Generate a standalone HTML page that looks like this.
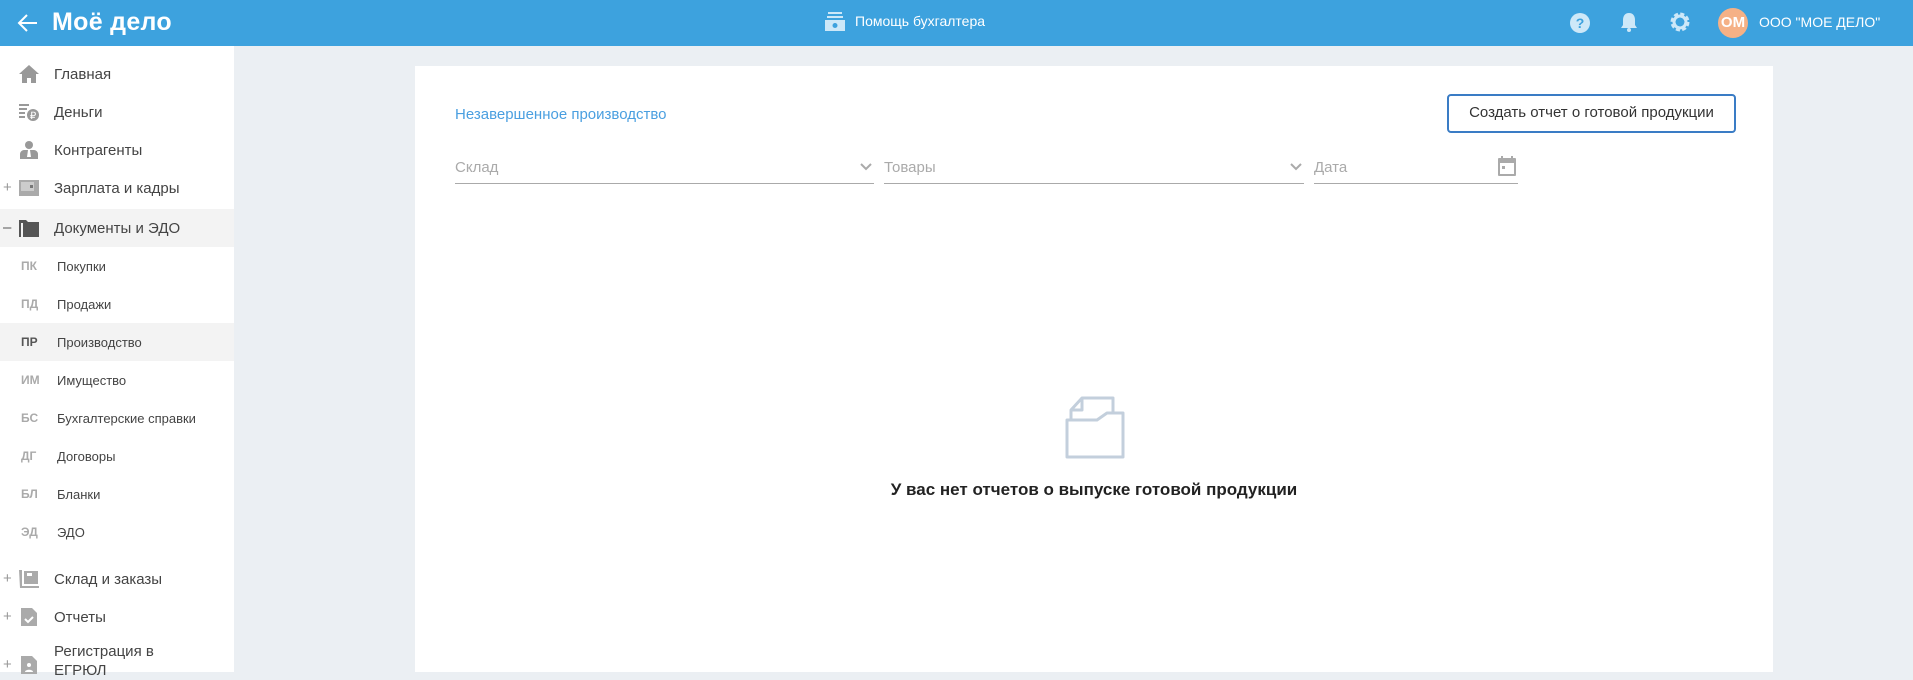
<!DOCTYPE html>
<html><head><meta charset="utf-8">
<style>
*{margin:0;padding:0;box-sizing:border-box}
body{width:1913px;height:672px;overflow:hidden;background:#ebeff3;font-family:"Liberation Sans","Noto Sans CJK SC",sans-serif;position:relative}
.hdr{position:absolute;left:0;top:0;width:1913px;height:46px;background:#3da2de;color:#fff}
.side{position:absolute;left:0;top:46px;width:234px;height:626px;background:#fff}
.it{position:absolute;left:0;width:234px;height:38px;font-size:15px;color:#444}
.it .t{position:absolute;left:54px;top:11px}
.it .ic{position:absolute;left:19px;top:10px;width:20px;height:18px}
.it .pm{position:absolute;left:3px;top:10px;color:#999;font-size:15px}
.sub{position:absolute;left:0;width:234px;height:38px;font-size:13px;color:#444}
.sub .c{position:absolute;left:21px;top:12px;font-weight:bold;color:#aaa;font-size:12px}
.sub .t{position:absolute;left:57px;top:12px}
.hl{background:#f3f3f3}
.card{position:absolute;left:415px;top:66px;width:1358px;height:606px;background:#fff}
.fld{position:absolute;top:91px;height:27px;border-bottom:1.5px solid #aaa;color:#aaa;font-size:15px}
.fld span{position:absolute;left:0;top:2px}
</style></head><body>
<div class="hdr">
 <svg style="position:absolute;left:17px;top:13px" width="22" height="20" viewBox="0 0 22 20"><path d="M20 10H3M10 2L2 10l8 8" stroke="#fff" stroke-width="2" fill="none"/></svg>
 <div style="position:absolute;left:52px;top:8px;font-size:25px;font-weight:bold;letter-spacing:0.3px">Моё дело</div>
 <svg style="position:absolute;left:825px;top:12px" width="20" height="19" viewBox="0 0 20 19"><rect x="3" y="0" width="14" height="2" fill="#cde8f8"/><rect x="2" y="4" width="16" height="2" fill="#cde8f8"/><rect x="0" y="8" width="20" height="11" fill="#cde8f8"/><circle cx="10" cy="13.5" r="2.5" fill="#3da2de"/></svg>
 <div style="position:absolute;left:855px;top:13px;font-size:14px">Помощь бухгалтера</div>
 <svg style="position:absolute;left:1569px;top:12px" width="22" height="22" viewBox="0 0 22 22"><circle cx="11" cy="11" r="10" fill="#cde8f8"/><text x="11" y="16" text-anchor="middle" font-size="14" font-weight="bold" fill="#3da2de" font-family="Liberation Sans">?</text></svg>
 <svg style="position:absolute;left:1620px;top:11px" width="18" height="22" viewBox="0 0 18 22"><path d="M9 2c4 0 6 3 6 7v5l2 3H1l2-3V9c0-4 2-7 6-7z" fill="#cde8f8"/><circle cx="9" cy="19" r="2" fill="#cde8f8"/></svg>
 <svg style="position:absolute;left:1669px;top:11px" width="22" height="22" viewBox="0 0 22 22"><circle cx="11" cy="11" r="7" fill="none" stroke="#cde8f8" stroke-width="5" stroke-dasharray="3.5 2"/><circle cx="11" cy="11" r="6" fill="none" stroke="#cde8f8" stroke-width="3"/></svg>
 <div style="position:absolute;left:1718px;top:8px;width:30px;height:30px;border-radius:50%;background:#f5b186;font-weight:bold;font-size:15px;text-align:center;line-height:30px">ОМ</div>
 <div style="position:absolute;left:1759px;top:14px;font-size:14px">ООО "МОЕ ДЕЛО"</div>
</div>
<div class="side">
 <div class="it" style="top:9px"><svg class="ic" viewBox="0 0 20 18"><path d="M10 0L0 9h3v9h5v-5h4v5h5V9h3z" fill="#999"/></svg><span class="t">Главная</span></div>
 <div class="it" style="top:47px"><svg class="ic" viewBox="0 0 20 18"><rect x="0" y="1" width="10" height="2" fill="#999"/><rect x="0" y="5" width="8" height="2" fill="#999"/><rect x="0" y="9" width="6" height="2" fill="#999"/><rect x="0" y="13" width="6" height="2" fill="#999"/><circle cx="14" cy="12" r="6" fill="#999"/><text x="14" y="16" text-anchor="middle" font-size="10" fill="#fff" font-family="Liberation Sans">₽</text></svg><span class="t">Деньги</span></div>
 <div class="it" style="top:85px"><svg class="ic" viewBox="0 0 20 18"><circle cx="10" cy="4" r="4" fill="#999"/><path d="M1 18v-5c0-2 2-4 4-4h10c2 0 4 2 4 4v5z" fill="#999"/><path d="M9 9h2l1 7h-4z" fill="#fff"/></svg><span class="t">Контрагенты</span></div>
 <div class="it" style="top:123px"><span class="pm">+</span><svg class="ic" viewBox="0 0 20 18"><rect x="0" y="1" width="20" height="16" fill="#aaa"/><rect x="2" y="3" width="13" height="9" fill="#ccc"/><rect x="11" y="6" width="3" height="3" fill="#777"/></svg><span class="t">Зарплата и кадры</span></div>
 <div class="it hl" style="top:163px;height:38px"><span class="pm" style="color:#555">–</span><svg class="ic" viewBox="0 0 20 18"><path d="M0 1h7l2 2h11v15H0z" fill="#555"/><rect x="2" y="4" width="2" height="14" fill="#f3f3f3"/></svg><span class="t">Документы и ЭДО</span></div>
 <div class="sub" style="top:201px"><span class="c">ПК</span><span class="t">Покупки</span></div>
 <div class="sub" style="top:239px"><span class="c">ПД</span><span class="t">Продажи</span></div>
 <div class="sub hl" style="top:277px"><span class="c" style="color:#555">ПР</span><span class="t">Производство</span></div>
 <div class="sub" style="top:315px"><span class="c">ИМ</span><span class="t">Имущество</span></div>
 <div class="sub" style="top:353px"><span class="c">БС</span><span class="t">Бухгалтерские справки</span></div>
 <div class="sub" style="top:391px"><span class="c">ДГ</span><span class="t">Договоры</span></div>
 <div class="sub" style="top:429px"><span class="c">БЛ</span><span class="t">Бланки</span></div>
 <div class="sub" style="top:467px"><span class="c">ЭД</span><span class="t">ЭДО</span></div>
 <div class="it" style="top:514px"><span class="pm">+</span><svg class="ic" viewBox="0 0 20 18"><path d="M0 0h3v16h17v2H1z" fill="#aaa"/><rect x="5" y="1" width="14" height="13" fill="#aaa"/><rect x="8" y="3" width="5" height="3" fill="#fff"/></svg><span class="t">Склад и заказы</span></div>
 <div class="it" style="top:552px"><span class="pm">+</span><svg class="ic" viewBox="0 0 20 18"><path d="M2 0h11l5 5v13H2z" fill="#aaa"/><path d="M6 11l3 3 5-5" stroke="#fff" stroke-width="2" fill="none"/></svg><span class="t">Отчеты</span></div>
 <div class="it" style="top:590px"><span class="pm" style="top:20px">+</span><svg class="ic" style="top:20px" viewBox="0 0 20 18"><path d="M2 0h11l5 5v13H2z" fill="#aaa"/><circle cx="10" cy="9" r="2" fill="#fff"/><path d="M6 16c0-3 8-3 8 0z" fill="#fff"/></svg><span class="t" style="top:6px;line-height:19px">Регистрация в<br>ЕГРЮЛ</span></div>
</div>
<div class="card">
 <div style="position:absolute;left:40px;top:40px;font-size:15px;color:#4a9fe0">Незавершенное производство</div>
 <div style="position:absolute;left:1032px;top:28px;width:289px;height:39px;border:2.5px solid #3a7cc5;border-radius:4px;font-size:15px;color:#333;text-align:center;line-height:34px">Создать отчет о готовой продукции</div>
 <div class="fld" style="left:40px;width:419px"><span>Склад</span><svg style="position:absolute;right:2px;top:6px" width="12" height="8" viewBox="0 0 12 8"><path d="M1 1l5 5 5-5" stroke="#aaa" stroke-width="2" fill="none"/></svg></div>
 <div class="fld" style="left:469px;width:420px"><span>Товары</span><svg style="position:absolute;right:2px;top:6px" width="12" height="8" viewBox="0 0 12 8"><path d="M1 1l5 5 5-5" stroke="#aaa" stroke-width="2" fill="none"/></svg></div>
 <div class="fld" style="left:899px;width:204px"><span>Дата</span><svg style="position:absolute;right:2px;top:-1px" width="18" height="20" viewBox="0 0 18 20"><rect x="3" y="0" width="2" height="4" fill="#aaa"/><rect x="13" y="0" width="2" height="4" fill="#aaa"/><rect x="0" y="2" width="18" height="18" rx="1" fill="#aaa"/><rect x="2" y="7" width="14" height="11" fill="#fff"/><rect x="4" y="10" width="3" height="3" fill="#aaa"/></svg></div>
 <svg style="position:absolute;left:650px;top:328px" width="60" height="66" viewBox="0 0 60 66"><path d="M6 25V16L17 4h31v21" fill="none" stroke="#c3cfdc" stroke-width="3" stroke-linejoin="round"/><path d="M6 16h11V4" fill="none" stroke="#c3cfdc" stroke-width="3" stroke-linejoin="round"/><path d="M2 26h30l10-7h16v44H2z" fill="#fff" stroke="#c3cfdc" stroke-width="3" stroke-linejoin="round"/></svg>
 <div style="position:absolute;left:0;width:1358px;top:414px;text-align:center;font-size:17px;font-weight:bold;color:#222">У вас нет отчетов о выпуске готовой продукции</div>
</div>
</body></html>
